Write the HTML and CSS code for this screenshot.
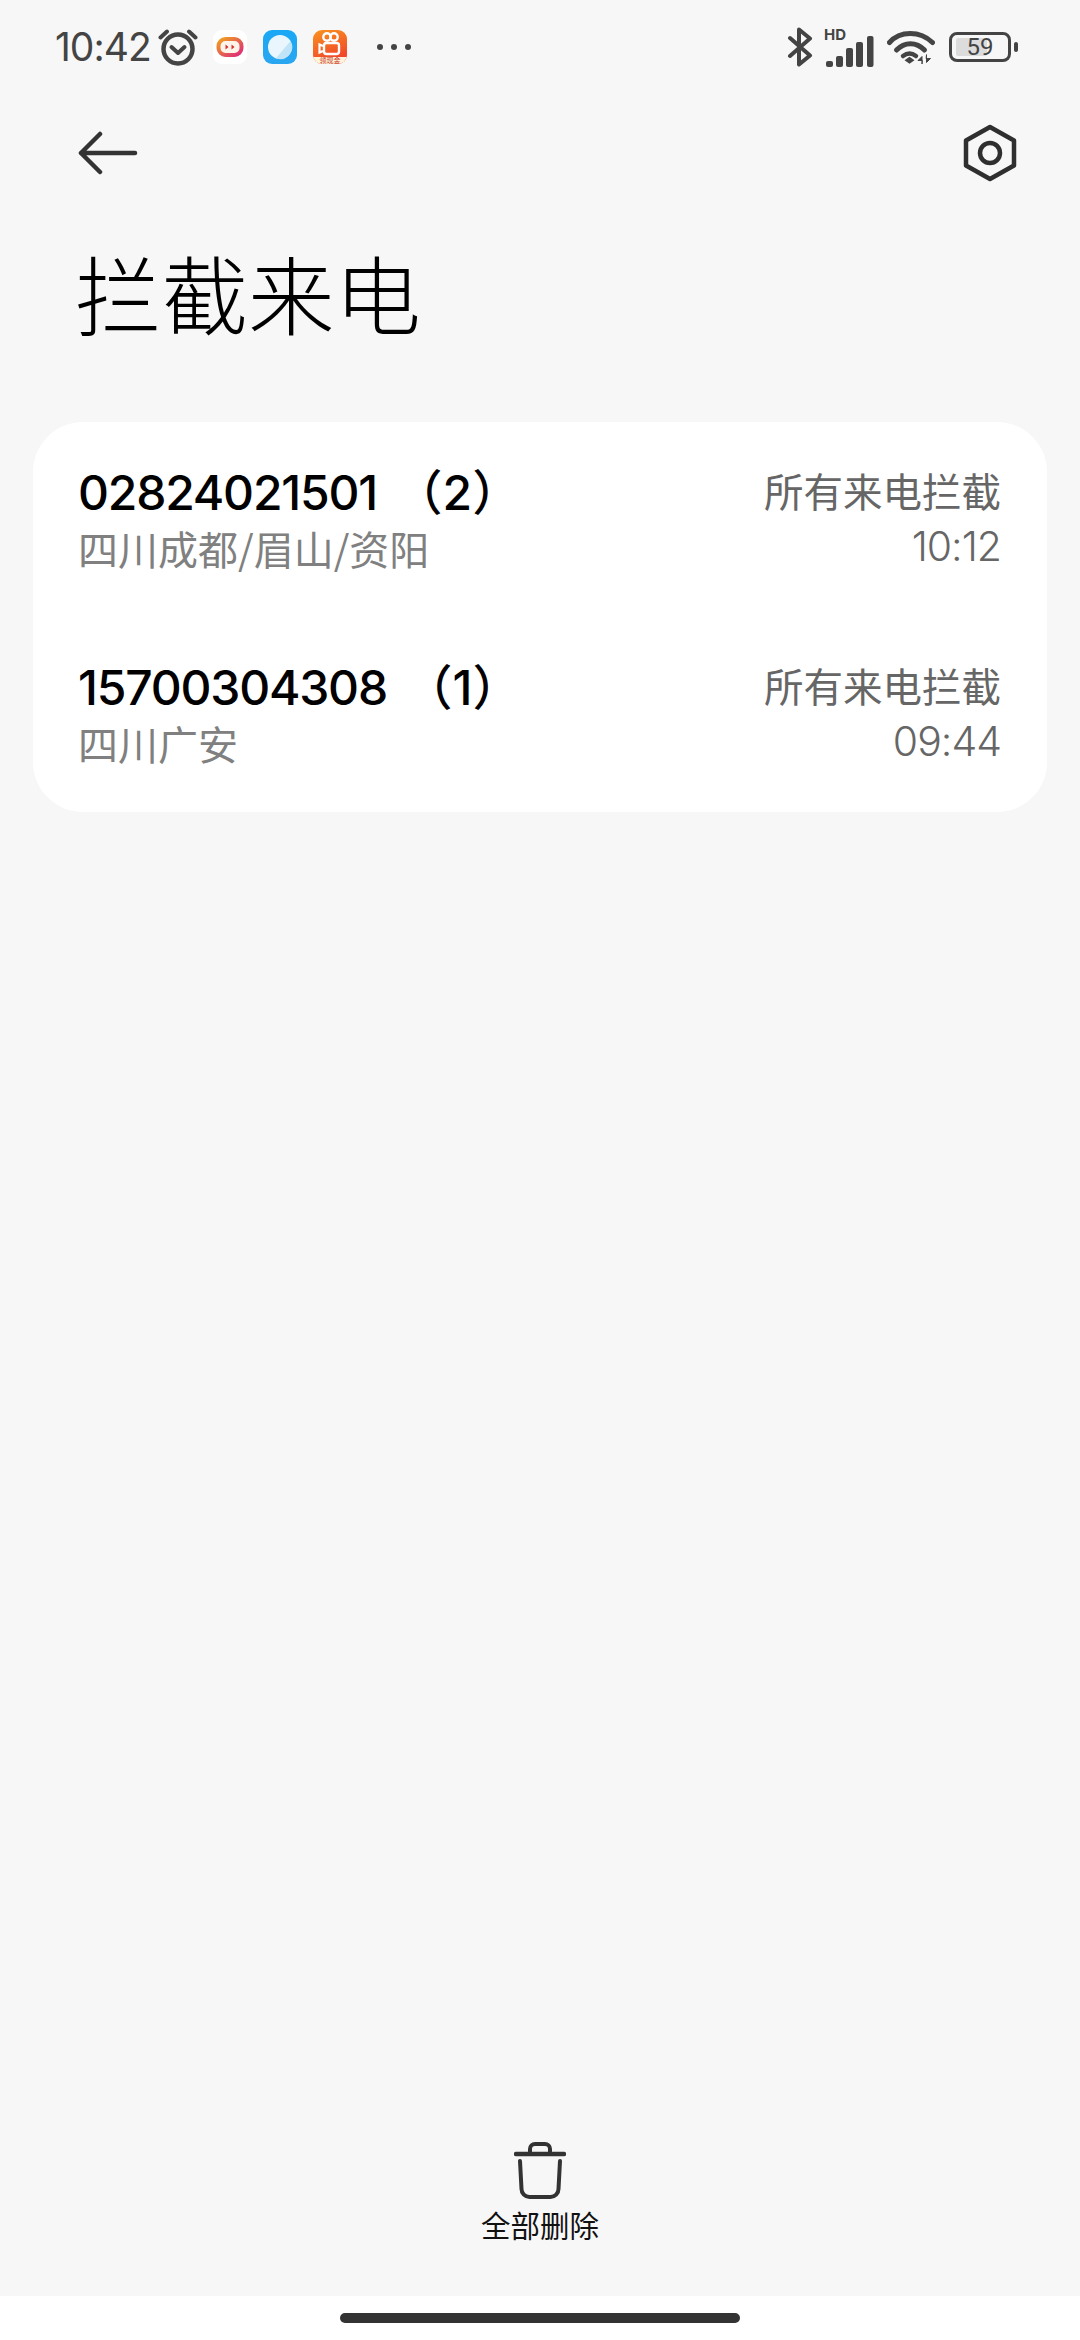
FILE: index.html
```html
<!DOCTYPE html>
<html lang="zh-CN">
<head>
<meta charset="utf-8">
<title>拦截来电</title>
<link rel="stylesheet" href="styles.css">
</head>
<body>
<div class="screen">
  <div class="status">
    <div class="status-left">
      <span class="clock">10:42</span>
      <svg class="ic-alarm" viewBox="0 0 40 38" fill="none" stroke="#444" stroke-linecap="round" stroke-linejoin="round">
        <circle cx="20" cy="21" r="14.500" stroke-width="4.500"/>
        <path d="M13.500 19 20 25l6.500-6" stroke-width="4"/>
        <path d="M2.500 9.500 9 3.500M37.500 9.500 31 3.500" stroke-width="4"/>
      </svg>
      <svg class="ic-app ic-app1" viewBox="0 0 34 34">
        <rect width="34" height="34" rx="9" fill="#fff"/>
        <defs><linearGradient id="g1" x1="0" y1="0" x2="1" y2="1"><stop offset="0" stop-color="#f0a020"/><stop offset="1" stop-color="#dd2a7b"/></linearGradient></defs>
        <rect x="5.500" y="9" width="23" height="16" rx="7" fill="#fff4ea" stroke="url(#g1)" stroke-width="4"/>
        <path d="M12.500 14.500v5l3-2.500zM18.500 14.500v5l3-2.500z" fill="#d8302f"/>
      </svg>
      <svg class="ic-app ic-app2" viewBox="0 0 34 34">
        <defs><linearGradient id="g2" x1="0" y1="0" x2="0" y2="1"><stop offset="0" stop-color="#19a8f5"/><stop offset="1" stop-color="#2aa6f0"/></linearGradient></defs>
        <rect width="34" height="34" rx="9" fill="url(#g2)"/>
        <circle cx="17" cy="17" r="12" fill="#eaf6fd"/>
        <path d="M27.500 11A12 12 0 0 1 13 28.300z" fill="#bfe3f7"/>
      </svg>
      <div class="app3">
        <svg class="app3-mark" viewBox="0 0 34 27">
          <circle cx="14" cy="7" r="3.700" fill="none" stroke="#fff" stroke-width="2.400"/>
          <circle cx="21" cy="7" r="3.700" fill="none" stroke="#fff" stroke-width="2.400"/>
          <rect x="11" y="13" width="15" height="11" rx="2.500" fill="none" stroke="#fff" stroke-width="2.400"/>
          <path d="M10 16 6.500 14.500v8L10 21" fill="none" stroke="#fff" stroke-width="2.200"/>
        </svg>
        <span class="app3-label">领现金</span>
      </div>
      <div class="more"><i></i><i></i><i></i></div>
    </div>
    <div class="status-right">
      <svg class="ic-bt" viewBox="0 0 26 40" fill="none" stroke="#444" stroke-width="4" stroke-linecap="round" stroke-linejoin="round">
        <path d="M3 11 23 28.500 12 37.500V2.500L23 11.500 3 29"/>
      </svg>
      <div class="signal">
        <span class="hd">HD</span>
        <svg class="bars" viewBox="0 0 50 31" fill="#444">
          <rect x="2" y="25" width="7" height="6" rx="2"/>
          <rect x="12" y="20" width="7" height="11" rx="2"/>
          <rect x="22" y="12" width="7" height="19" rx="2"/>
          <rect x="32" y="6" width="7" height="25" rx="2"/>
          <rect x="43" y="0" width="6.500" height="31" rx="2"/>
        </svg>
      </div>
      <svg class="ic-wifi" viewBox="0 0 48 33" fill="none" stroke="#444" stroke-linecap="round">
        <path d="M2.500 11.500C13 -0.500 33 -0.500 45.500 11.500" stroke-width="5"/>
        <path d="M9.500 19C17.500 10.500 29.500 10.500 37.500 19" stroke-width="5"/>
        <path d="M16 25c4-3 9-3 13 0" stroke-width="4.500"/>
        <path d="M17.500 29.300 22.500 25.800l5 3.500-5 3.500z" fill="#444" stroke="none"/>
        <path d="M35 33V25.500l-4 4h4zM39.500 24v7.500l4-4h-4z" fill="#444" stroke="#444" stroke-width="1"/>
      </svg>
      <div class="battery">
        <div class="battery-body">
          <div class="battery-fill"></div>
          <span class="battery-num">59</span>
        </div>
        <div class="battery-tip"></div>
      </div>
    </div>
  </div>

  <div class="appbar">
    <svg class="ic-back" viewBox="0 0 60 44" fill="none" stroke="#333" stroke-width="4.500" stroke-linecap="round" stroke-linejoin="round">
      <path d="M57 22H3M22 3 3 22l19 19"/>
    </svg>
    <svg class="ic-gear" viewBox="0 0 54 58" fill="none" stroke="#2f2f2f" stroke-width="4.500" stroke-linejoin="round">
      <path d="M27 3 51 16.500v25L27 55 3 41.500v-25z"/>
      <circle cx="27" cy="29" r="10"/>
    </svg>
  </div>

  <h1 class="title">拦截来电</h1>

  <div class="card">
    <div class="row">
      <div class="row-main">
        <div class="number">02824021501 <span class="count">（2）</span></div>
        <div class="place">四川成都/眉山/资阳</div>
      </div>
      <div class="row-side">
        <div class="reason">所有来电拦截</div>
        <div class="time">10:12</div>
      </div>
    </div>
    <div class="row">
      <div class="row-main">
        <div class="number">15700304308 <span class="count">（1）</span></div>
        <div class="place">四川广安</div>
      </div>
      <div class="row-side">
        <div class="reason">所有来电拦截</div>
        <div class="time">09:44</div>
      </div>
    </div>
  </div>

  <div class="toolbar">
    <svg class="ic-trash" viewBox="0 0 52 58" fill="none" stroke="#333" stroke-linecap="round" stroke-linejoin="round">
      <path d="M2 12h48" stroke-width="4.500"/>
      <path d="M16 11V7a5 5 0 0 1 5-5h10a5 5 0 0 1 5 5v4" stroke-width="4"/>
      <path d="M6 19l1.500 28a8 8 0 0 0 8 8h21a8 8 0 0 0 8-8L46 19" stroke-width="4"/>
    </svg>
    <div class="toolbar-label">全部删除</div>
  </div>

  <div class="navbar"><div class="handle"></div></div>
</div>
</body>
</html>
```

FILE: styles.css
```css
* { box-sizing: border-box; }
html, body { margin: 0; padding: 0; }
body {
  width: 1080px;
  height: 2340px;
  overflow: hidden;
  background: #f7f7f7;
  font-family: Inter, "Noto Sans CJK SC", sans-serif;
}
.screen {
  height: 2340px;
  display: flex;
  flex-direction: column;
}
.status {
  height: 92px;
  padding: 24px 62px 0 55px;
  display: flex;
  justify-content: space-between;
  align-items: flex-start;
}
.status-left, .status-right { display: flex; align-items: center; height: 46px; }
.clock { font-size: 39px; letter-spacing: -1px; color: #444; line-height: 46px; width: 103px; white-space: nowrap; }
.ic-alarm { width: 40px; height: 38px; margin-right: 15px; }
.ic-app { width: 34px; height: 34px; margin-right: 16px; }
.app3 {
  width: 34px;
  height: 34px;
  border-radius: 9px;
  background: linear-gradient(160deg, #f8941e, #f0322e);
  margin-right: 30px;
  overflow: hidden;
  display: flex;
  flex-direction: column;
  align-items: center;
}
.app3-mark { width: 34px; height: 27px; flex: none; }
.app3-label {
  width: 34px;
  height: 7px;
  background: #fff3d8;
  color: #c8321e;
  font-size: 7px;
  line-height: 7px;
  text-align: center;
  white-space: nowrap;
}
.more { display: flex; gap: 8px; }
.more i { width: 6px; height: 6px; border-radius: 50%; background: #444; display: block; }

.ic-bt { width: 26px; height: 40px; margin-right: 11px; }
.signal { position: relative; width: 50px; height: 38px; margin-right: 13px; }
.bars { width: 50px; height: 31px; position: absolute; left: 0; bottom: -1px; }
.hd {
  position: absolute;
  left: 0;
  top: -1px;
  font-size: 15px;
  line-height: 15px;
  font-weight: 700;
  color: #444;
}
.ic-wifi { width: 48px; height: 33px; margin-right: 14px; }
.battery { display: flex; align-items: center; gap: 3px; }
.battery-body {
  position: relative;
  width: 62px;
  height: 30px;
  border: 3px solid #444;
  border-radius: 8px;
  padding: 3px 4px;
}
.battery-fill { width: 64%; height: 100%; background: #dcdcdc; border-radius: 2px; }
.battery-num {
  position: absolute;
  inset: 0;
  text-align: center;
  font-family: Roboto, sans-serif;
  font-size: 24px;
  line-height: 24px;
  color: #444;
}
.battery-tip { width: 4px; height: 10px; background: #444; border-radius: 2px; }

.appbar {
  height: 58px;
  margin-top: 32px;
  padding: 0 63px 0 78px;
  display: flex;
  justify-content: space-between;
  align-items: center;
}
.ic-back { width: 60px; height: 44px; }
.ic-gear { width: 54px; height: 58px; }

.title {
  margin: 60px 0 0 75px;
  font-size: 86.500px;
  line-height: 100px;
  font-weight: 300;
  color: #000;
  font-family: "Noto Sans CJK SC", sans-serif;
}

.card {
  margin: 80px 33px 0;
  height: 390px;
  background: #fff;
  border-radius: 50px;
  display: flex;
  flex-direction: column;
}
.row {
  height: 195px;
  padding: 44px 46px 0 45px;
  display: flex;
  justify-content: space-between;
  align-items: flex-start;
}
.number {
  font-size: 48px;
  letter-spacing: -1.200px;
  line-height: 54px;
  font-weight: 500;
  color: #000;
  white-space: pre;
}
.count { margin-left: 6px; letter-spacing: 0; }
.place {
  font-family: "Noto Sans CJK SC", sans-serif;
  font-size: 40px;
  line-height: 56px;
  letter-spacing: 0;
  color: #808080;
}
.row-side { text-align: right; margin-top: -6px; }
.reason {
  font-family: "Noto Sans CJK SC", sans-serif;
  font-size: 39.500px;
  line-height: 60px;
  color: #666;
}
.time {
  font-size: 41px;
  letter-spacing: -1px;
  line-height: 52px;
  font-weight: 300;
  color: #666;
}

.toolbar {
  margin-top: auto;
  height: 154px;
  display: flex;
  flex-direction: column;
  align-items: center;
}
.ic-trash { width: 52px; height: 58px; }
.toolbar-label {
  margin-top: 4px;
  font-family: "Noto Sans CJK SC", sans-serif;
  font-size: 29.500px;
  line-height: 40px;
  color: #111;
}
.navbar {
  height: 44px;
  background: #fff;
  padding-top: 17px;
  display: flex;
  justify-content: center;
}
.handle { width: 400px; height: 10px; border-radius: 5px; background: #333; }
```
